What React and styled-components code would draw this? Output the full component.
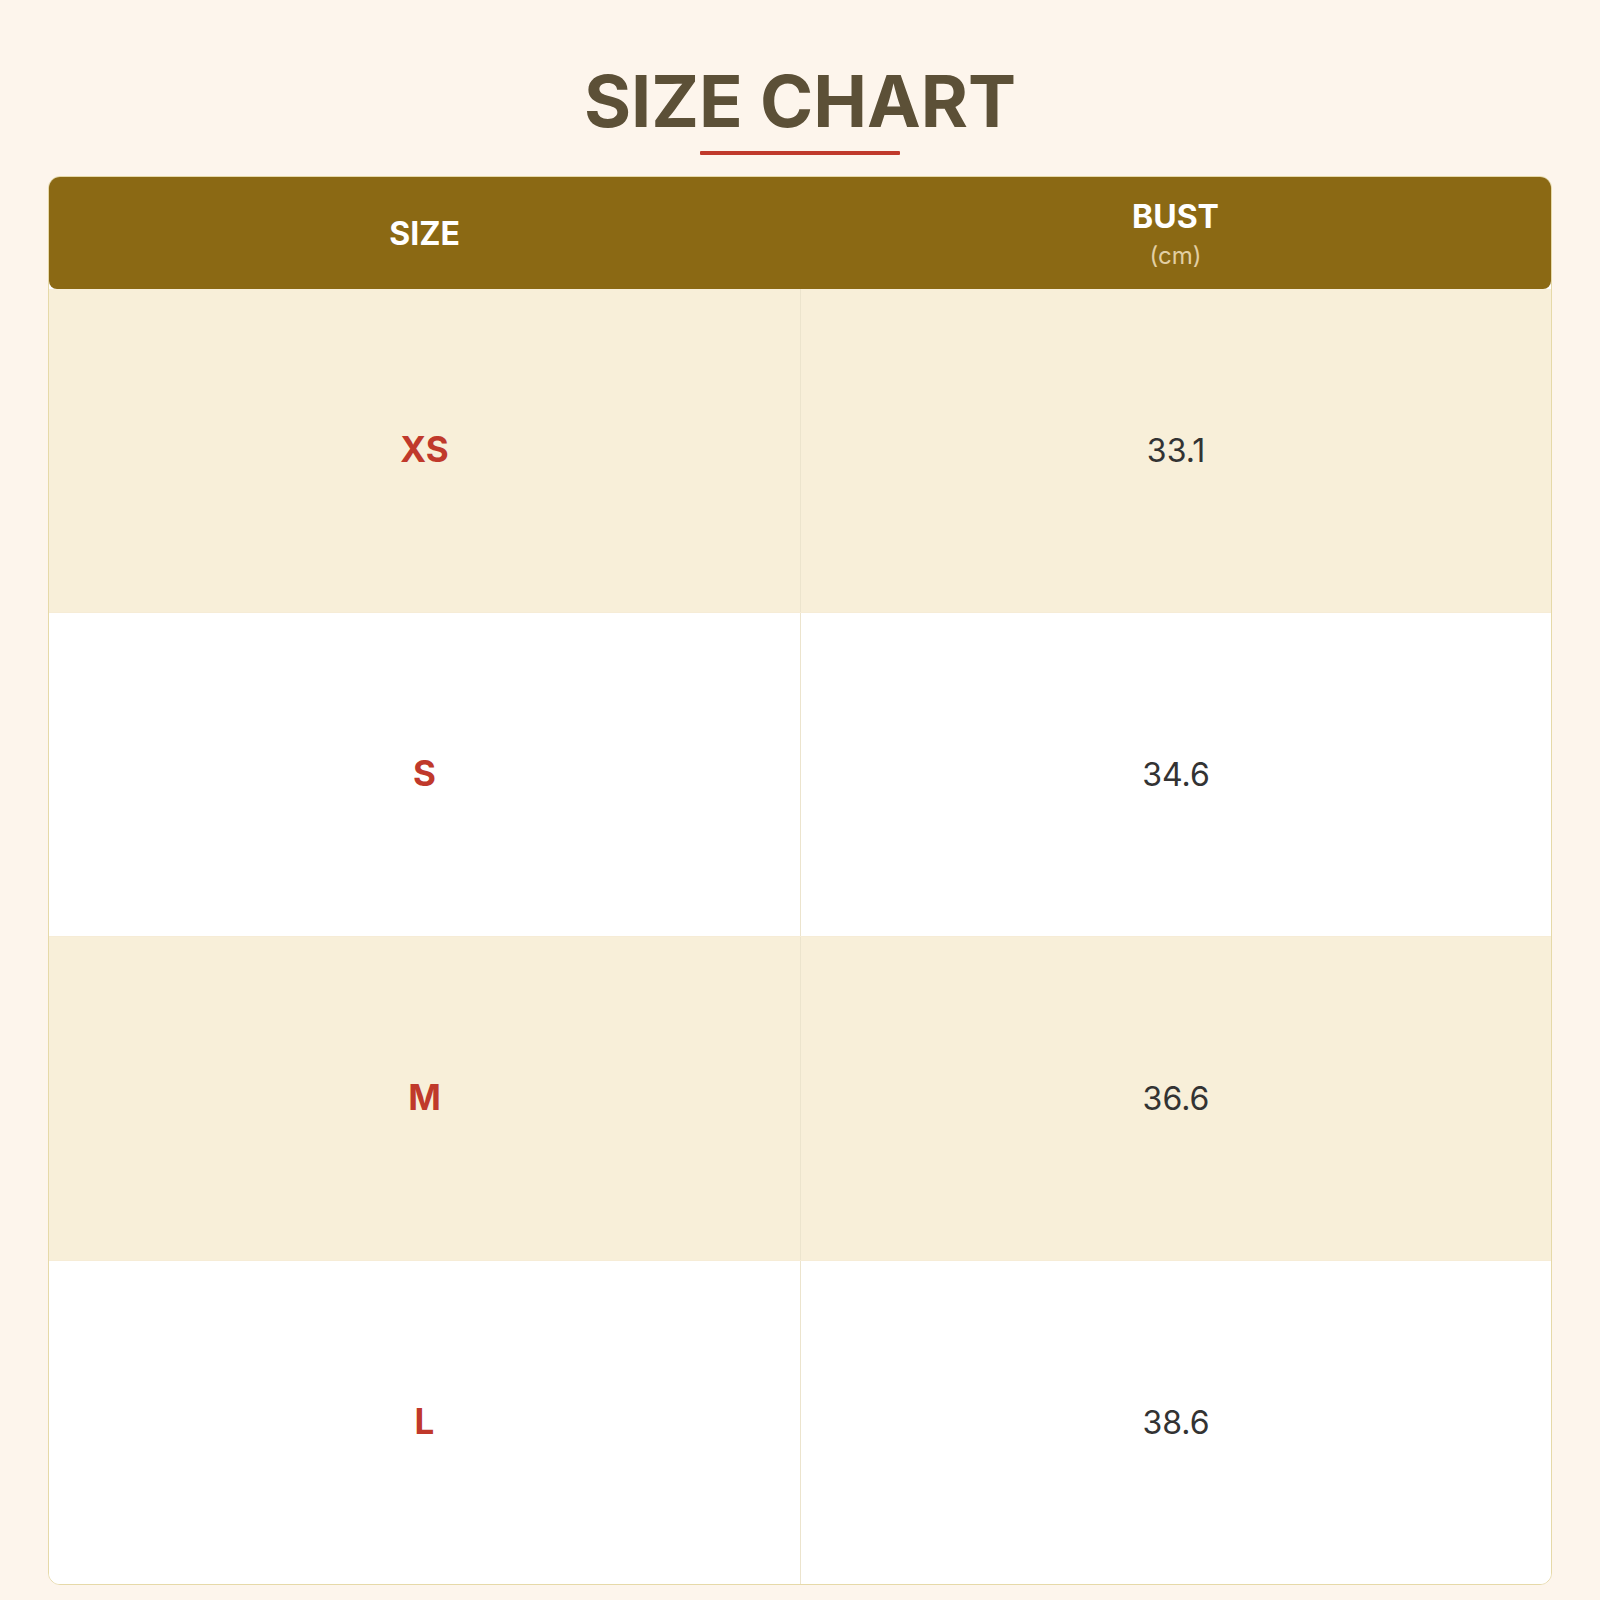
import React from "react";
import styled, { createGlobalStyle } from "styled-components";

const GlobalStyle = createGlobalStyle`
  html, body {
    margin: 0;
    padding: 0;
    background: #fdf5ec;
  }
  body {
    font-family: Inter, "Noto Sans", "Liberation Sans", sans-serif;
  }
  * { box-sizing: border-box; }
`;

const Page = styled.div`
  height: 100vh;
  display: flex;
  flex-direction: column;
  align-items: center;
  padding: 65px 48px 15px;
  background: #fdf5ec;
`;

const Title = styled.h1`
  margin: 0;
  font-size: 72px;
  line-height: 1;
  font-weight: 700;
  color: #5c5037;
  letter-spacing: 0;
`;

const Underline = styled.div`
  width: 200px;
  height: 4px;
  margin-top: 14px;
  background: #c0392b;
  border-radius: 1px;
`;

const Table = styled.div`
  margin-top: 21px;
  align-self: stretch;
  flex: 1;
  display: flex;
  flex-direction: column;
  background: #ffffff;
  border: 1px solid #e6d9a8;
  border-radius: 12px;
  overflow: hidden;
`;

const Header = styled.div`
  height: 112px;
  flex: none;
  display: grid;
  grid-template-columns: 1fr 1fr;
  background: #8b6914;
  border-radius: 8px;
`;

const HeadCell = styled.div`
  display: flex;
  flex-direction: column;
  align-items: center;
  justify-content: center;
  padding-top: 1px;
  color: #ffffff;
  font-weight: 700;
  font-size: 32px;
  line-height: 1.25;
  letter-spacing: 0;
`;

const Unit = styled.span`
  margin-top: 4px;
  font-size: 24px;
  font-weight: 400;
  letter-spacing: 0;
  color: #e2cfa3;
`;

const Row = styled.div`
  flex: 1;
  display: grid;
  grid-template-columns: 1fr 1fr;
  background: ${(p) => (p.$striped ? "#f8efd9" : "#ffffff")};
  & + & {
    border-top: 1px solid ${(p) => (p.$striped ? "#f4e7c9" : "#f6ecd6")};
  }
`;

const Cell = styled.div`
  display: flex;
  align-items: center;
  justify-content: center;
  font-size: 32px;
  & + & {
    border-left: 1px solid #ece4cd;
  }
`;

const SizeCell = styled(Cell)`
  padding-bottom: 4px;
  color: #c0392b;
  font-weight: 700;
  font-size: 35px;
`;

const ValueCell = styled(Cell)`
  color: #333333;
  font-weight: 400;
`;

const rows = [
  { size: "XS", bust: "33.1" },
  { size: "S", bust: "34.6" },
  { size: "M", bust: "36.6" },
  { size: "L", bust: "38.6" },
];

export default function App() {
  return (
    <>
      <GlobalStyle />
      <Page>
        <Title>SIZE CHART</Title>
        <Underline />
        <Table>
          <Header>
            <HeadCell>SIZE</HeadCell>
            <HeadCell>
              BUST
              <Unit>(cm)</Unit>
            </HeadCell>
          </Header>
          {rows.map((r, i) => (
            <Row key={r.size} $striped={i % 2 === 0}>
              <SizeCell>{r.size}</SizeCell>
              <ValueCell>{r.bust}</ValueCell>
            </Row>
          ))}
        </Table>
      </Page>
    </>
  );
}
